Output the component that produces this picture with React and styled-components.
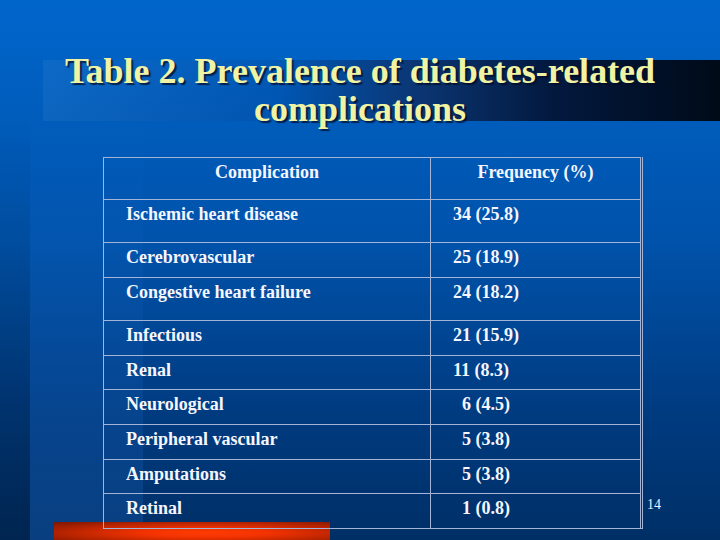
import React from 'react';
import styled, { createGlobalStyle } from 'styled-components';

const GlobalStyle = createGlobalStyle`
  html, body {
    margin: 0;
    padding: 0;
    background: #003068;
  }
`;

const rows = [
  { name: 'Ischemic heart disease', freq: '34 (25.8)', height: 43 },
  { name: 'Cerebrovascular', freq: '25 (18.9)', height: 35 },
  { name: 'Congestive heart failure', freq: '24 (18.2)', height: 43 },
  { name: 'Infectious', freq: '21 (15.9)', height: 35 },
  { name: 'Renal', freq: '11 (8.3)', height: 34 },
  { name: 'Neurological', freq: '6 (4.5)', height: 35, indent: true },
  { name: 'Peripheral vascular', freq: '5 (3.8)', height: 35, indent: true },
  { name: 'Amputations', freq: '5 (3.8)', height: 34, indent: true },
  { name: 'Retinal', freq: '1 (0.8)', height: 35, indent: true }
];

const Slide = styled.div`
  width: 720px;
  height: 540px;
  overflow: hidden;
  box-sizing: border-box;
  padding-top: 52px;
  font-family: "Liberation Serif", "Times New Roman", serif;
  background:
    radial-gradient(ellipse at 55% 60%, #ff3c00 0%, #f23200 30%, #b82400 65%, #7a1600 100%) 54px 522px / 276px 18px no-repeat,
    linear-gradient(90deg, rgba(255, 255, 255, 0.05) 0%, rgba(0, 40, 110, 0.15) 35%, #0b3674 55%, #03193f 75%, #000a18 100%) 43px 60px / 677px 61px no-repeat,
    linear-gradient(180deg, rgba(0, 0, 0, 0) 20%, rgba(0, 0, 0, 0.22) 100%) 0 0 / 30px 100% no-repeat,
    linear-gradient(180deg, rgba(60, 140, 230, 0) 20%, rgba(40, 120, 220, 0.22) 100%) 30px 0 / 113px 100% no-repeat,
    linear-gradient(180deg, #0066cc 0%, #0052aa 45%, #003c82 75%, #002f66 100%);
`;

const Title = styled.h1`
  margin: 0;
  font-size: 36px;
  line-height: 38px;
  font-weight: bold;
  text-align: center;
  color: #f0f2a4;
  text-shadow: 2px 2px 1px rgba(0, 12, 40, 0.75);
`;

const Body = styled.div`
  display: flex;
  align-items: flex-end;
  margin-top: 29px;
  padding-left: 103px;
`;

const Table = styled.div`
  display: flex;
  flex-direction: column;
  border-left: 1px solid #a3b4d6;
  border-bottom: 1px solid #a3b4d6;
  border-right: 3px double #a3b4d6;
`;

const Row = styled.div`
  display: flex;
  box-sizing: border-box;
  height: ${p => p.$height}px;
  border-top: 1px solid #a3b4d6;
`;

const Cell = styled.div`
  box-sizing: border-box;
  width: ${p => p.$width}px;
  padding: 4px 0 0 ${p => (p.$center ? 0 : p.$indent ? 31 : 22)}px;
  text-align: ${p => (p.$center ? 'center' : 'left')};
  border-left: ${p => (p.$divider ? '1px solid #a3b4d6' : 'none')};
  font-size: 18px;
  line-height: 20px;
  font-weight: bold;
  color: #f6f6ff;
  white-space: nowrap;
`;

const PageNumber = styled.div`
  margin: 0 0 16px 4px;
  font-size: 14px;
  line-height: 16px;
  color: #eef2ff;
`;

export default function App() {
  return (
    <>
      <GlobalStyle />
      <Slide>
        <Title>
          Table 2. Prevalence of diabetes-related
          <br />
          complications
        </Title>
        <Body>
          <Table>
            <Row $height={42}>
              <Cell $width={326} $center>Complication</Cell>
              <Cell $width={210} $center $divider>Frequency (%)</Cell>
            </Row>
            {rows.map(r => (
              <Row key={r.name} $height={r.height}>
                <Cell $width={326}>{r.name}</Cell>
                <Cell $width={210} $divider $indent={r.indent}>{r.freq}</Cell>
              </Row>
            ))}
          </Table>
          <PageNumber>14</PageNumber>
        </Body>
      </Slide>
    </>
  );
}
